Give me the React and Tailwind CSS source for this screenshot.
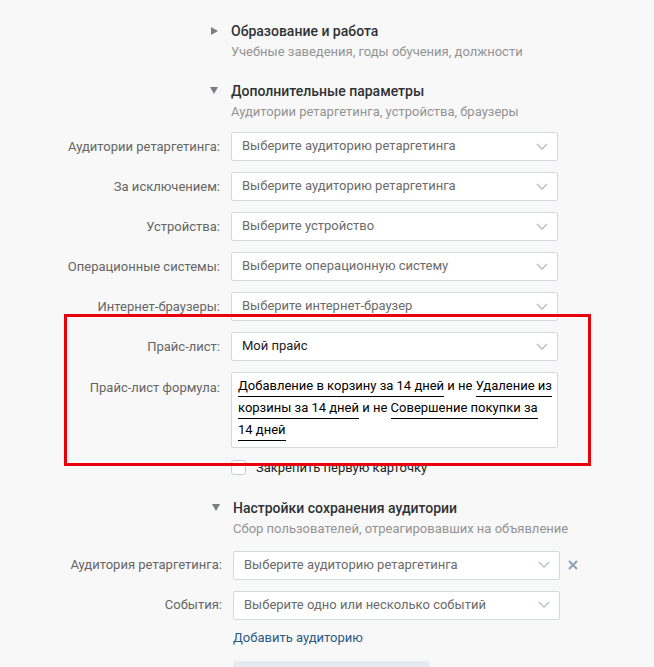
import React from "react";

const Chevron = () => (
  <svg width="12" height="7" viewBox="0 0 12 7" className="shrink-0">
    <path d="M1 1l5 5 5-5" fill="none" stroke="#b4bcc6" strokeWidth="1.3" />
  </svg>
);

const Header = ({ open, title, subtitle, className = "" }) => (
  <div className={"flex " + className}>
    <div className="w-[231px] shrink-0 flex justify-end pr-[13px] pt-[5px]">
      {open ? (
        <svg width="8" height="7" viewBox="0 0 8 7">
          <path d="M0 0h8L4 7z" fill="#7b7f84" />
        </svg>
      ) : (
        <svg width="7" height="8" viewBox="0 0 7 8">
          <path d="M0 0l7 4-7 4z" fill="#7b7f84" />
        </svg>
      )}
    </div>
    <div>
      <div className="text-[14px] leading-[18px] font-medium text-[#2f3235]">{title}</div>
      <div className="mt-[3px] text-[13px] leading-[18px] text-[#939393]">{subtitle}</div>
    </div>
  </div>
);

const Row = ({ label, value, placeholder = true, extra }) => (
  <div className="flex items-center">
    <div className="w-[221px] shrink-0 pr-[1px] text-right text-[13px] text-[#656565]">{label}</div>
    <div className="ml-[10px] w-[327px] h-[29px] bg-white border border-[#d3d9de] rounded-[2px] flex items-center justify-between pl-[10px] pr-[9px] pb-[1px]">
      <span className={"text-[13px] " + (placeholder ? "text-[#6b6b6b]" : "text-[#222]")}>{value}</span>
      <Chevron />
    </div>
    {extra}
  </div>
);

const Link = ({ children }) => (
  <span className="border-b border-black pb-[3px]">{children}</span>
);

export default function App() {
  return (
    <div className="relative w-[654px] h-[667px] overflow-hidden bg-[#f8f8f8] font-['Roboto',sans-serif]">
      <div className="pt-[22px]">
        <Header title="Образование и работа" subtitle="Учебные заведения, годы обучения, должности" />
        <Header
          open
          className="mt-[21px]"
          title="Дополнительные параметры"
          subtitle="Аудитории ретаргетинга, устройства, браузеры"
        />

        <div className="mt-[11px] flex flex-col gap-[11px]">
          <Row label="Аудитории ретаргетинга:" value="Выберите аудиторию ретаргетинга" />
          <Row label="За исключением:" value="Выберите аудиторию ретаргетинга" />
          <Row label="Устройства:" value="Выберите устройство" />
          <Row label="Операционные системы:" value="Выберите операционную систему" />
          <Row label="Интернет-браузеры:" value="Выберите интернет-браузер" />
          <Row label="Прайс-лист:" value="Мой прайс" placeholder={false} />
          <div className="flex items-start">
            <div className="w-[221px] shrink-0 pr-[1px] pt-[6px] text-right text-[13px] text-[#656565]">
              Прайс-лист формула:
            </div>
            <div className="ml-[10px] w-[327px] h-[76px] bg-white border border-[#d3d9de] rounded-[2px] pl-[6px] pr-[4px] pt-[2px] text-[13px] leading-[22px] text-black">
              <Link>Добавление в корзину за 14 дней</Link> и не <Link>Удаление из корзины за 14 дней</Link> и не{" "}
              <Link>Совершение покупки за 14 дней</Link>
            </div>
          </div>
        </div>

        <div className="mt-[10px] flex items-center pl-[231px]">
          <div className="w-[15px] h-[15px] bg-white border border-[#c5d0db] rounded-[3px]" />
          <span className="ml-[10px] text-[13px] text-[#222]">Закрепить первую карточку</span>
        </div>

        <div className="ml-[2px]">
          <Header
            open
            className="mt-[21px]"
            title="Настройки сохранения аудитории"
            subtitle="Сбор пользователей, отреагировавших на объявление"
          />
          <div className="mt-[13px] flex flex-col gap-[11px]">
            <Row
              label="Аудитория ретаргетинга:"
              value="Выберите аудиторию ретаргетинга"
              extra={
                <svg width="10" height="10" viewBox="0 0 10 10" className="ml-[8px]">
                  <path d="M1 1l8 8M9 1l-8 8" stroke="#8fa1b4" strokeWidth="2" />
                </svg>
              }
            />
            <Row label="События:" value="Выберите одно или несколько событий" />
          </div>
          <div className="mt-[9px] pl-[231px] text-[13px] leading-[18px] text-[#2a5885]">Добавить аудиторию</div>
          <div className="mt-[14px] ml-[231px] w-[197px] h-[30px] rounded-[4px] bg-[#e5ebf1]" />
        </div>
      </div>

      <div className="absolute left-[64px] top-[314px] w-[527px] h-[152px] border-[3px] border-[#e8000b]" />
    </div>
  );
}
